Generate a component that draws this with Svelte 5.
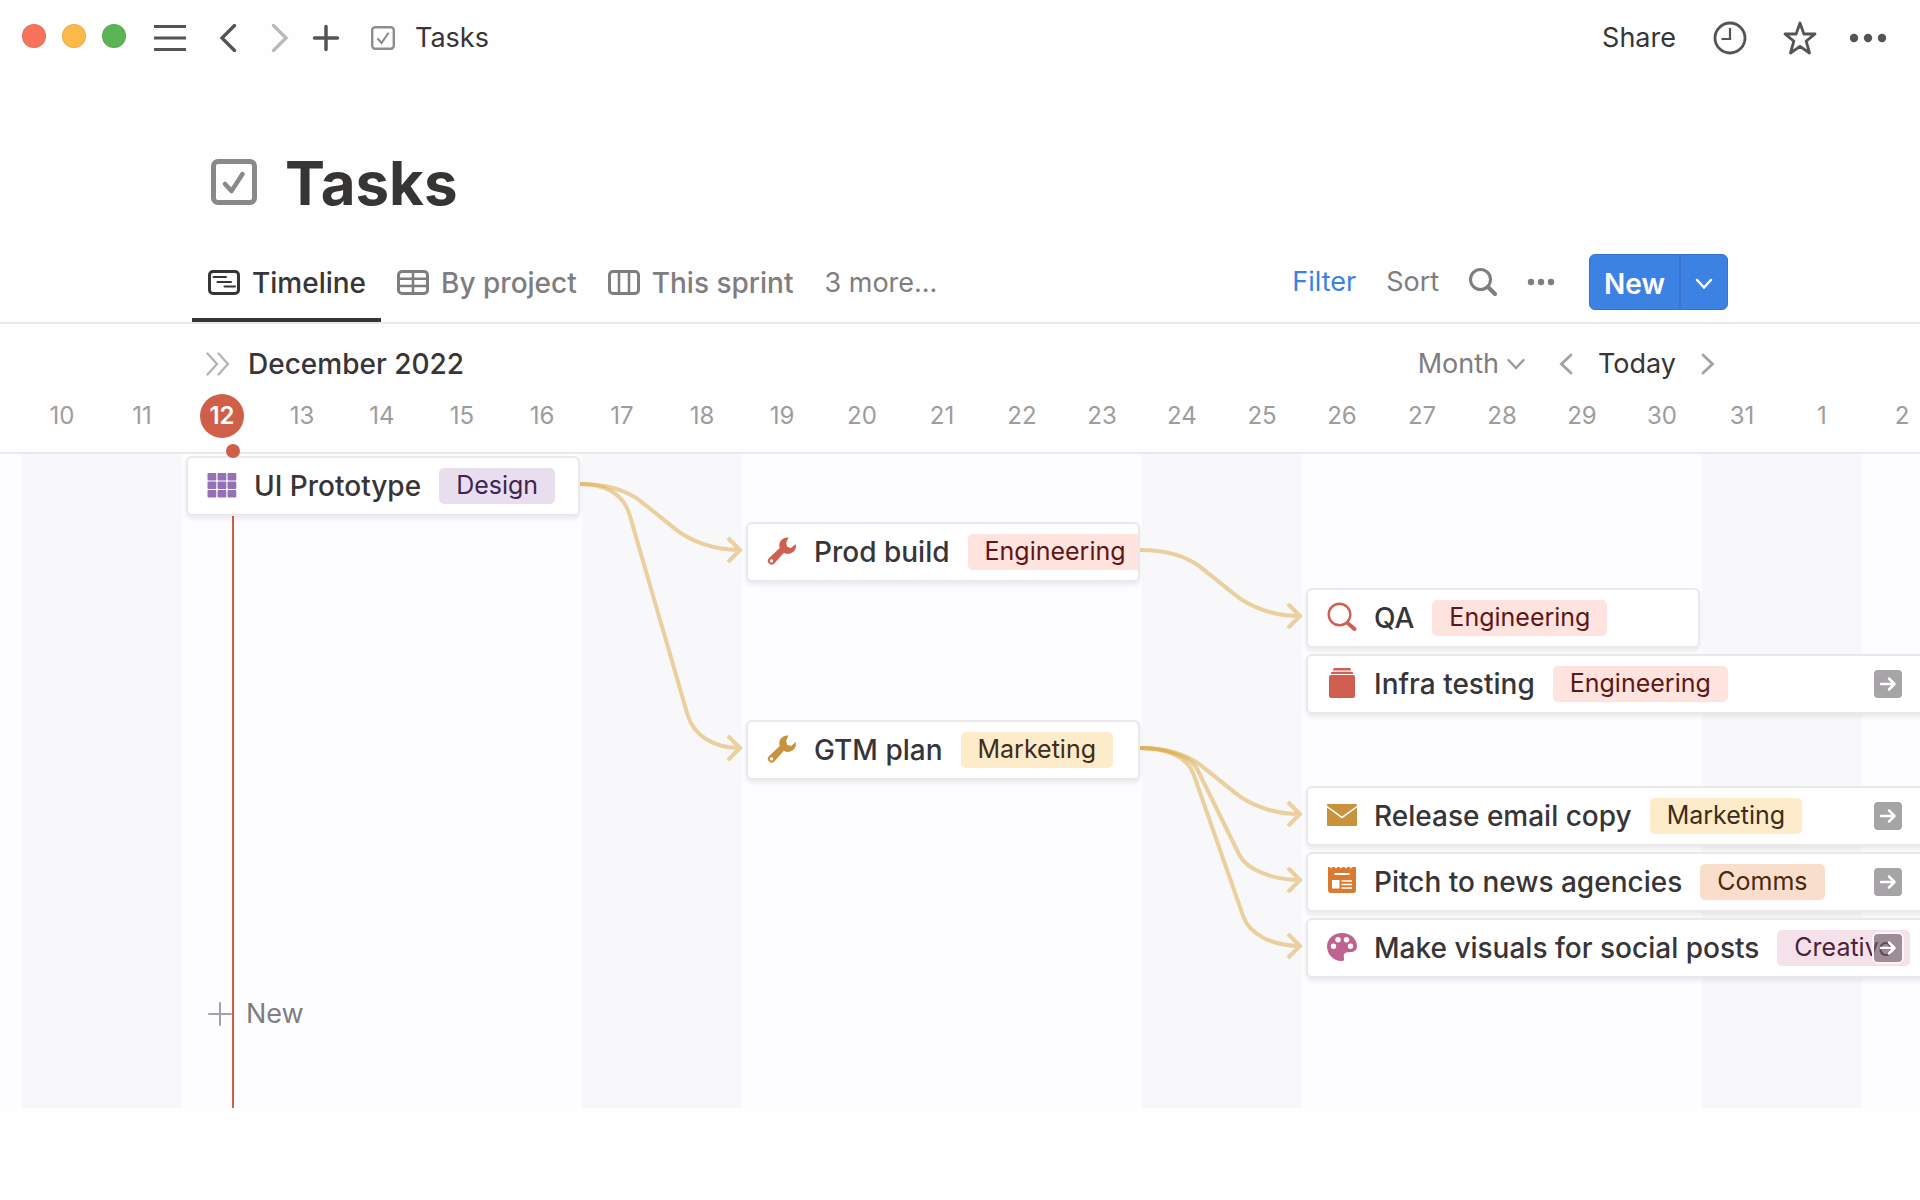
<script lang="ts">
  type Task = {
    title: string;
    tag: string;
    tone: string;
    icon: string;
    row: number;
    start: number;
    span: number;
    more?: boolean;
  };

  const dayWidth = 80;
  const rowHeight = 66;
  const edge = 22;
  const today = 12;

  const days = [10, 11, 12, 13, 14, 15, 16, 17, 18, 19, 20, 21, 22, 23, 24, 25, 26, 27, 28, 29, 30, 31, 1, 2];
  const isWeekend = (i: number) => i % 7 < 2;

  const tasks: Task[] = [
    { title: 'UI Prototype', tag: 'Design', tone: 'purple', icon: 'grid', row: 1, start: 3, span: 5 },
    { title: 'Prod build', tag: 'Engineering', tone: 'red', icon: 'wrench', row: 2, start: 10, span: 5 },
    { title: 'QA', tag: 'Engineering', tone: 'red', icon: 'search', row: 3, start: 17, span: 5 },
    { title: 'Infra testing', tag: 'Engineering', tone: 'red', icon: 'stack', row: 4, start: 17, span: 8, more: true },
    { title: 'GTM plan', tag: 'Marketing', tone: 'yellow', icon: 'wrench', row: 5, start: 10, span: 5 },
    { title: 'Release email copy', tag: 'Marketing', tone: 'yellow', icon: 'mail', row: 6, start: 17, span: 8, more: true },
    { title: 'Pitch to news agencies', tag: 'Comms', tone: 'orange', icon: 'news', row: 7, start: 17, span: 8, more: true },
    { title: 'Make visuals for social posts', tag: 'Creative', tone: 'pink', icon: 'palette', row: 8, start: 17, span: 8, more: true }
  ];

  // from / to are indexes into tasks
  const links = [[0, 1], [0, 4], [1, 2], [4, 5], [4, 6], [4, 7]];

  function linkPath(from: Task, to: Task) {
    const x1 = edge + (from.start - 1 + from.span) * dayWidth - 2;
    const y1 = from.row * rowHeight - 36;
    const x2 = edge + (to.start - 1) * dayWidth - 2;
    const y2 = to.row * rowHeight - 36;
    const dy = y2 - y1;
    // steeper links bend closer to the cards
    const a = 66 - dy / 16;
    const b = 14 + dy / 16;
    const c = a + 3;
    const d = b + 3;
    const k = b * 0.7;
    const slope = (x2 - x1 - a - c) / (dy - b - d);
    return `M${x1} ${y1}C${x1 + 24} ${y1} ${x1 + a - k * slope} ${y1 + b - k} ${x1 + a} ${y1 + b}`
      + `L${x2 - c} ${y2 - d}C${x2 - c + k * slope} ${y2 - d + k} ${x2 - 26} ${y2} ${x2} ${y2}`
      + `M${x2 - 12} ${y2 - 12}L${x2} ${y2}L${x2 - 12} ${y2 + 12}`;
  }
</script>

{#snippet taskIcon(name: string)}
  <svg class="task-icon" width="30" height="30" viewBox="0 0 30 30" fill="currentColor" aria-hidden="true">
    {#if name === 'grid'}
      {#each [0.5, 10.5, 20.5] as x}
        {#each [3, 11.5, 20] as y}
          <rect {x} {y} width="8.8" height="7.500" rx="1" />
        {/each}
      {/each}
    {:else if name === 'wrench'}
      <path fill-rule="evenodd" d="M21.500 1.500a8 8 0 0 0-8.800 10.600L1.900 22.300a3.700 3.700 0 0 0 5.400 5.100L16.900 16.800A8 8 0 0 0 28.700 8l-4.600 4-4-1.300-.9-4ZM4.600 23.200a1.700 1.700 0 1 1 0 3.400 1.700 1.700 0 0 1 0-3.400Z" />
    {:else if name === 'search'}
      <circle cx="12.500" cy="12.500" r="10.800" fill="none" stroke="currentColor" stroke-width="2.400" />
      <path d="M20.500 21l7 6" fill="none" stroke="currentColor" stroke-width="4" stroke-linecap="round" />
    {:else if name === 'stack'}
      <rect x="2" y="7" width="26" height="23" rx="2" />
      <path d="M5 3.800h20q1 0 1.200 2.200H3.800Q4 3.800 5 3.800ZM7 0h16q.8 0 1 2.500H6Q6.200 0 7 0Z" />
    {:else if name === 'mail'}
      <path d="M1 4h28q1 0 1 1v.7L15 16.500 0 5.700V5q0-1 1-1ZM0 7.400l15 11 15-11V25q0 1-1 1H1q-1 0-1-1Z" />
    {:else if name === 'news'}
      <path fill-rule="evenodd" d="M1 1h2l1 1.500L5.500 1h2L9 2.500 10.500 1h2L14 2.500 15.500 1h2L19 2.500 20.500 1h2L24 2.500 25.500 1H29v23a3 3 0 0 1-3 3H4a3 3 0 0 1-3-3ZM7.500 7v2h15V7ZM5 14v8.500h7.500V14Zm9.500.3v1.500H25v-1.500Zm0 3.500v1.500H25v-1.500Zm0 3.500v1.500H25v-1.500Z" />
    {:else}
      <path fill-rule="evenodd" d="M15 1C6.500 1 0 7 0 14.500S6.500 29 14 29c2.300 0 3.400-1 3.100-2.600-.5-2-.8-5.900 3.400-6.100 3.600-.2 9.500.2 9.500-6C30 6.500 23.500 1 15 1ZM11 5a2.700 2.700 0 1 1 0 5.400A2.700 2.700 0 0 1 11 5Zm8.500 0a2.700 2.700 0 1 1 0 5.400 2.700 2.700 0 0 1 0-5.400ZM6.500 11.500a2.700 2.700 0 1 1 0 5.400 2.700 2.700 0 0 1 0-5.400Zm17 0a2.700 2.700 0 1 1 0 5.400 2.700 2.700 0 0 1 0-5.400Z" />
    {/if}
  </svg>
{/snippet}

<div class="window">
  <header class="topbar">
    <div class="lights">
      <span class="light close"></span>
      <span class="light minimize"></span>
      <span class="light zoom"></span>
    </div>
    <button class="menu" aria-label="Menu">
      <svg width="32" height="28" viewBox="0 0 32 28"><path d="M0 2.500h32M0 14h32M0 25.500h32" stroke-width="3" /></svg>
    </button>
    <div class="history">
      <button aria-label="Back">
        <svg width="32" height="28" viewBox="0 0 32 28"><path d="M22.500 1.500 10 14l12.500 12.500" stroke-width="3.300" stroke-linecap="round" /></svg>
      </button>
      <button class="disabled" aria-label="Forward">
        <svg width="32" height="28" viewBox="0 0 32 28"><path d="M9.500 1.500 22 14 9.500 26.500" stroke-width="3.300" stroke-linecap="round" /></svg>
      </button>
    </div>
    <button class="add" aria-label="New page">
      <svg width="32" height="28" viewBox="0 0 32 28"><path d="M4.500 14h23M16 2.500v23" stroke-width="3.500" stroke-linecap="round" /></svg>
    </button>
    <a class="crumb" href="#tasks">
      <svg width="24" height="24" viewBox="0 0 24 24">
        <rect x="1.200" y="1.200" width="21.600" height="21.600" rx="3" stroke-width="2.400" />
        <path d="M7 13l3.500 4L17 7.500" stroke-width="2.200" stroke-linecap="round" />
      </svg>
      <span>Tasks</span>
    </a>
    <div class="actions">
      <button>Share</button>
      <button aria-label="Updates">
        <svg width="40" height="34" viewBox="-3 0 40 34"><circle cx="17" cy="17" r="15" stroke-width="2.800" /><path d="M17 7v11H8.500" stroke-width="2.200" /></svg>
      </button>
      <button aria-label="Favorite">
        <svg width="36" height="34" viewBox="0 0 36 34"><path d="M18 2l3.900 11H33l-8.800 7.200L27.500 32 18 25.300 8.500 32l3.300-11.800L3 13h11.100Z" stroke-width="2.800" stroke-linejoin="round" /></svg>
      </button>
      <button aria-label="More">
        <svg class="dots" width="36" height="10" viewBox="0 0 36 10"><circle cx="4" cy="5" r="4.200" /><circle cx="18" cy="5" r="4.200" /><circle cx="32" cy="5" r="4.200" /></svg>
      </button>
    </div>
  </header>

  <main>
    <div class="title">
      <svg width="46" height="46" viewBox="0 0 46 46">
        <rect x="2.500" y="2.500" width="41" height="41" rx="4.500" stroke-width="5" />
        <path d="M14 25l6.500 7L31.500 15" stroke-width="4.500" stroke-linecap="round" stroke-linejoin="round" />
      </svg>
      <h1 id="tasks">Tasks</h1>
    </div>

    <div class="toolbar">
      <nav class="tabs">
        <button class="tab active">
          <svg width="32" height="26" viewBox="0 0 32 26">
            <rect x="1.500" y="1.500" width="29" height="22" rx="3.500" stroke-width="3" />
            <path d="M5.500 7H18M9.500 12H23M16.500 16.500H27" stroke-width="2" stroke-linecap="round" />
          </svg>
          Timeline
        </button>
        <button class="tab">
          <svg width="32" height="26" viewBox="0 0 32 26">
            <rect x="1.500" y="1.500" width="29" height="22" rx="3.500" stroke-width="3" />
            <path d="M1 8.700h30M1 16h30M16 1v23" stroke-width="2.500" />
          </svg>
          By project
        </button>
        <button class="tab">
          <svg width="32" height="26" viewBox="0 0 32 26">
            <rect x="1.500" y="1.500" width="29" height="22" rx="3.500" stroke-width="3" />
            <path d="M11 1v23M21 1v23" stroke-width="2.500" />
          </svg>
          This sprint
        </button>
        <button class="tab more">3 more...</button>
      </nav>
      <div class="tools">
        <button class="filter">Filter</button>
        <button>Sort</button>
        <button class="search" aria-label="Search">
          <svg width="28" height="28" viewBox="0 0 28 28"><circle cx="11.500" cy="11.500" r="10" stroke-width="3" /><path d="M19 19l7 7" stroke-width="4" stroke-linecap="round" /></svg>
        </button>
        <button aria-label="More options">
          <svg class="dots" width="28" height="8" viewBox="0 0 28 8"><circle cx="4" cy="4" r="3.200" /><circle cx="14" cy="4" r="3.200" /><circle cx="24" cy="4" r="3.200" /></svg>
        </button>
        <div class="new">
          <button>New</button>
          <button class="new-menu" aria-label="New from template">
            <svg width="18" height="12" viewBox="0 0 18 12"><path d="M2 2l7 7.500L16 2" stroke-width="2.500" stroke-linecap="round" /></svg>
          </button>
        </div>
      </div>
    </div>

    <section class="timeline">
      <div class="period">
        <button class="expand" aria-label="Show table">
          <svg width="24" height="24" viewBox="0 0 24 24"><path d="M1.500 1.500 11 12 1.500 22.500M12.500 1.500 22 12l-9.500 10.500" stroke-width="2.300" stroke-linecap="round" /></svg>
        </button>
        <h2>December 2022</h2>
        <div class="scale">
          <select aria-label="Scale">
            <option>Month</option>
            <option>Week</option>
            <option>Quarter</option>
          </select>
          <svg width="18" height="12" viewBox="0 0 18 12"><path d="M1.500 2 9 10l7.500-8" stroke-width="2.300" stroke-linecap="round" /></svg>
        </div>
        <div class="pager">
          <button aria-label="Previous"><svg width="14" height="22" viewBox="0 0 14 22"><path d="M12 2 2.500 11 12 20" stroke-width="2.800" stroke-linecap="round" /></svg></button>
          <button class="today">Today</button>
          <button aria-label="Next"><svg width="14" height="22" viewBox="0 0 14 22"><path d="M2 2l9.500 9L2 20" stroke-width="2.800" stroke-linecap="round" /></svg></button>
        </div>
      </div>

      <div class="days">
        {#each days as day}
          <span class="day" class:current={day === today}>{day}</span>
        {/each}
      </div>

      <div class="board">
        {#each days as _, i}
          <div class="column" class:weekend={isWeekend(i)} style:grid-column={i + 1}></div>
        {/each}

        <svg class="links" aria-hidden="true">
          {#each links as [from, to]}
            <path d={linkPath(tasks[from], tasks[to])} />
          {/each}
        </svg>

        <button class="new-task">
          <svg width="24" height="24" viewBox="0 0 24 24"><path d="M1 12h22M12 1v22" stroke-width="2" stroke-linecap="round" /></svg>
          New
        </button>

        <div class="now"></div>

        {#each tasks as task}
          <article class="card {task.tone}" style:grid-row={task.row} style:grid-column="{task.start} / span {task.span}">
            {@render taskIcon(task.icon)}
            <span class="name">{task.title}</span>
            <span class="tag">{task.tag}</span>
          </article>
          {#if task.more}
            <button class="jump" class:over={task.tone === 'pink'} style:grid-row={task.row} aria-label="Scroll to end">
              <svg width="20" height="20" viewBox="0 0 20 20"><path d="M3 10h13M11 4.500l5.500 5.500-5.500 5.500" stroke-width="2.500" stroke-linecap="round" stroke-linejoin="round" /></svg>
            </button>
          {/if}
        {/each}

        <div class="now-dot"></div>
      </div>
    </section>
  </main>
</div>

<style>
  :global(body) {
    margin: 0;
    background: #fefefe;
  }

  .window {
    min-height: 100vh;
    overflow: hidden;
    font-family: Inter, 'Liberation Sans', sans-serif;
    font-size: 27px;
    line-height: 36px;
    color: #373538;
  }

  button,
  select {
    margin: 0;
    padding: 0;
    border: 0;
    background: none;
    font: inherit;
    color: inherit;
    cursor: pointer;
  }

  button {
    display: flex;
    align-items: center;
  }

  svg {
    display: block;
    flex: none;
    fill: none;
    stroke: currentColor;
  }

  .task-icon {
    margin-bottom: 2px;
    fill: currentColor;
    stroke: none;
  }

  .dots {
    fill: currentColor;
    stroke: none;
  }

  /* Window bar */
  .topbar {
    display: flex;
    align-items: center;
    height: 76px;
    padding: 0 34px 0 22px;
    color: #555355;
  }

  .lights {
    display: flex;
    gap: 16px;
    padding-bottom: 4px;
    margin-right: 28px;
  }

  .light {
    box-sizing: border-box;
    width: 24px;
    height: 24px;
    border: 1px solid rgba(0, 0, 0, 0.08);
    border-radius: 50%;
  }

  .close { background: #f9735b; }
  .minimize { background: #fcb94a; }
  .zoom { background: #5cb554; }

  .menu {
    margin-right: 26px;
  }

  .history {
    display: flex;
    gap: 20px;
    margin-right: 14px;
  }

  .disabled {
    color: #b9b8ba;
  }

  .add {
    margin-right: 29px;
  }

  .crumb {
    display: flex;
    align-items: center;
    gap: 20px;
    color: #8e8c8f;
    text-decoration: none;
  }

  .crumb span {
    color: #373538;
  }

  .actions {
    display: flex;
    align-items: center;
    gap: 32px;
    margin-left: auto;
  }

  .actions button:first-child {
    margin-right: 2px;
    color: #373538;
  }

  /* Page title */
  .title {
    display: flex;
    align-items: center;
    gap: 28px;
    padding: 66px 192px 0 211px;
    color: #8a888b;
  }

  h1 {
    margin: 0;
    padding-top: 2px;
    font-size: 60px;
    font-weight: 700;
    line-height: 78px;
    color: #373533;
  }

  /* View tabs */
  .toolbar {
    display: flex;
    justify-content: space-between;
    height: 78px;
    margin-top: 22px;
    padding: 0 192px;
    border-bottom: 2px solid #e9e8ea;
  }

  .tabs {
    display: flex;
  }

  .tab {
    gap: 12px;
    padding: 4px 15px 0 16px;
    border-bottom: 4px solid transparent;
    font-size: 28px;
    font-weight: 500;
    color: #7f7d80;
  }

  .tab.active {
    border-color: #373538;
    color: #373538;
  }

  .tab.more {
    font-size: 27px;
    font-weight: 400;
  }

  .tools {
    display: flex;
    align-items: center;
    gap: 30px;
    padding-bottom: 2px;
    color: #7f7d80;
  }

  .filter {
    color: #3a81e2;
  }

  .new {
    display: flex;
    height: 56px;
    box-sizing: border-box;
    margin-left: 4px;
    border: 1px solid #3573cc;
    border-radius: 6px;
    background: #3c82e3;
    font-size: 28px;
    font-weight: 600;
    color: #fff;
  }

  .new button {
    padding: 3px 14px 0;
  }

  .new .new-menu {
    border-left: 2px solid #3573cc;
  }

  /* Timeline */
  .period {
    display: flex;
    align-items: center;
    height: 80px;
    padding: 0 205px 0 206px;
  }

  .expand {
    margin-right: 18px;
    color: #b4b2b5;
  }

  h2 {
    margin: 0 auto 0 0;
    font-size: 28px;
    font-weight: 500;
  }

  .scale {
    display: flex;
    align-items: center;
    gap: 8px;
    margin-right: 34px;
    color: #9a999b;
  }

  .scale select {
    appearance: none;
    field-sizing: content;
    color: #7f7d80;
  }

  .pager {
    display: flex;
    gap: 25px;
    color: #a3a2a4;
  }

  .today {
    color: #373538;
  }

  .days {
    display: grid;
    grid-template-columns: repeat(24, 80px);
    height: 48px;
    padding: 0 0 0 22px;
    border-bottom: 2px solid #e9e8ea;
  }

  .day {
    justify-self: center;
    width: 44px;
    height: 44px;
    margin-top: -10px;
    border-radius: 50%;
    font-size: 24px;
    line-height: 44px;
    text-align: center;
    color: #9d9c9e;
  }

  .day.current {
    background: #d05f4a;
    font-weight: 600;
    color: #fff;
  }

  .board {
    position: relative;
    display: grid;
    grid-template-columns: repeat(24, 80px);
    grid-template-rows: repeat(9, 66px);
    padding: 2px 0 58px 22px;
    background: #fdfcfe;
  }

  .column {
    grid-row: 1 / -1;
    margin: -2px 0 -58px;
  }

  .weekend {
    background: #f8f7f9;
  }

  .links {
    position: absolute;
    top: 0;
    left: 0;
    width: 100%;
    height: 100%;
    stroke: #dcaa44;
    stroke-width: 4;
  }

  .links path {
    opacity: 0.5;
  }

  .card {
    position: relative;
    display: flex;
    align-items: center;
    box-sizing: border-box;
    height: 60px;
    margin: 0 2px 0 4px;
    padding-left: 19px;
    overflow: hidden;
    border: 2px solid #e9e8ea;
    border-radius: 6px;
    background: #fff;
    box-shadow: 0 3px 4px rgba(30, 20, 40, 0.08);
    white-space: nowrap;
  }

  .name {
    margin: 0 18px 0 17px;
    font-size: 28px;
    font-weight: 500;
  }

  .tag {
    padding: 0 17px 2px;
    border-radius: 5px;
    font-size: 25px;
    line-height: 34px;
  }

  .purple .task-icon { color: #9470b4; }
  .red .task-icon { color: #d05f50; }
  .yellow .task-icon { color: #c9923c; }
  .orange .task-icon { color: #d87b30; }
  .pink .task-icon { color: #c0628f; }

  .purple .tag { background: #e9deee; color: #412454; }
  .red .tag { background: #fee3de; color: #5d1715; }
  .yellow .tag { background: #fdebc9; color: #402c1b; }
  .orange .tag { background: #f9decc; color: #49290e; }
  .pink .tag { background: #f5e1e9; color: #4c2337; }

  .jump {
    position: absolute;
    top: 16px;
    right: 18px;
    justify-content: center;
    width: 28px;
    height: 28px;
    border-radius: 4px;
    background: #a6a4a6;
    color: #fff;
  }

  .jump.over {
    background: rgba(110, 96, 104, 0.65);
    box-shadow: 0 0 0 2px #fbf3f7;
  }

  .now {
    position: absolute;
    top: 0;
    bottom: 0;
    left: 232px;
    width: 2px;
    background: #d05f4a;
  }

  .now-dot {
    position: absolute;
    top: -10px;
    left: 226px;
    width: 14px;
    height: 14px;
    border-radius: 50%;
    background: #d05f4a;
  }

  .new-task {
    grid-row: 9;
    grid-column: 3 / span 3;
    gap: 14px;
    height: 60px;
    padding-left: 26px;
    color: #7f7d80;
  }

  .new-task svg {
    color: #a3a2a4;
  }
</style>
